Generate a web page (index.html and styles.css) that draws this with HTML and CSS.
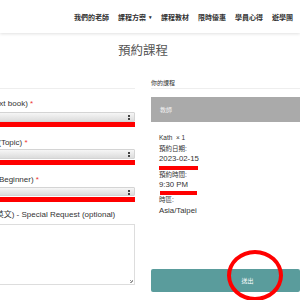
FILE: index.html
```html
<!DOCTYPE html>
<html lang="zh-Hant">
<head>
<meta charset="utf-8">
<link rel="stylesheet" href="styles.css">
</head>
<body>
<header class="topbar">
  <nav class="nav">
    <span class="nav-item">我們的老師</span>
    <span class="nav-item">課程方案<span class="caret">▾</span></span>
    <span class="nav-item">課程教材</span>
    <span class="nav-item">限時優惠</span>
    <span class="nav-item">學員心得</span>
    <span class="nav-item">遊學團</span>
  </nav>
</header>
<main class="page">
  <h1 class="title">預約課程</h1>
  <div class="columns">
    <section class="form-col">
      <div class="col-head"></div>
      <div class="field f1">
        <label class="label l1">課程教材 (Text book) <span class="req">*</span></label>
        <div class="select"><span class="arrows"></span></div>
        <div class="redbar"></div>
      </div>
      <div class="field f2">
        <label class="label l2">主題 (Topic) <span class="req">*</span></label>
        <div class="select"><span class="arrows"></span></div>
        <div class="redbar"></div>
      </div>
      <div class="field f3">
        <label class="label l3">程度 (Beginner) <span class="req">*</span></label>
        <div class="select"><span class="arrows"></span></div>
        <div class="redbar"></div>
      </div>
      <div class="field f4">
        <label class="label l4">特殊要求(請用英文) - Special Request (optional)</label>
        <div class="textarea"><span class="grip"></span></div>
      </div>
    </section>
    <aside class="summary-col">
      <div class="col-head summary-head">你的課程</div>
      <div class="teacher-bar">教師</div>
      <div class="info">
        <div class="line">Kath &nbsp;× 1</div>
        <div class="line l-date">預約日期:</div>
        <div class="line val">2023-02-15</div>
        <div class="redmark w39"></div>
        <div class="line">預約時間:</div>
        <div class="line val">9:30 PM</div>
        <div class="redmark w37"></div>
        <div class="line">時區:</div>
        <div class="line val last">Asia/Taipei</div>
      </div>
      <div class="submit-wrap">
        <button class="submit">送出</button>
        <span class="circle"></span>
      </div>
    </aside>
  </div>
</main>
</body>
</html>
```
FILE: styles.css
```css
* { box-sizing: border-box; }
html, body { margin: 0; padding: 0; }
body {
  width: 300px;
  height: 300px;
  overflow: hidden;
  background: #fff;
  font-family: "Liberation Sans", "Noto Sans CJK TC", Arial, sans-serif;
  color: #333;
}
.topbar {
  height: 33px;
  background: #fff;
  box-shadow: 0 1px 3px rgba(0,0,0,0.12);
  display: flex;
  align-items: center;
  position: relative;
  z-index: 2;
}
.nav {
  display: flex;
  gap: 9px;
  padding-left: 74px;
  white-space: nowrap;
  font-size: 7px;
  font-weight: bold;
  color: #333;
  padding-top: 1px;
}
.nav-item { display: flex; align-items: center; }
.caret { margin-left: 3px; font-size: 5px; }
.title {
  margin: 10px 0 0 118px;
  font-size: 12.5px;
  line-height: 14px;
  font-weight: normal;
  color: #555;
  font-family: "Noto Sans CJK TC", sans-serif;
}
.columns {
  display: grid;
  grid-template-columns: 215px 149px;
  column-gap: 16px;
  margin-left: -80px;
  margin-top: 15px;
}
.col-head {
  height: 17px;
  border-bottom: 1px solid #eee;
}
.summary-head {
  font-size: 6px;
  line-height: 8px;
  padding-top: 7px;
  color: #333;
}
.label {
  display: block;
  font-size: 8px;
  line-height: 10px;
  color: #333;
  white-space: nowrap;
  overflow: hidden;
}
.req { color: #e33; }
.l1 { margin-top: 10px; padding-left: 34px; }
.l2 { margin-top: 11px; padding-left: 60px; }
.l3 { margin-top: 10px; padding-left: 58px; }
.l4 { margin-top: 8px; padding-left: 25px; }
.select {
  position: relative;
  height: 10px;
  border: 1px solid #d4d4d4;
  border-radius: 1px;
  background: linear-gradient(#f6f6f6, #dcdcdc);
}
.f1 .select { margin-top: 3px; }
.f2 .select { margin-top: 1px; }
.f3 .select { margin-top: 2px; height: 9px; }
.arrows {
  position: absolute;
  right: 4px;
  top: 2px;
  width: 2px;
  height: 5px;
  border-top: 2px solid #444;
  border-bottom: 2px solid #444;
}
.redbar {
  height: 5px;
  background: #f00;
}
.f2 .redbar { margin-top: 1px; }
.f3 .redbar { margin-top: 1px; }
.textarea {
  position: relative;
  margin-top: 4px;
  height: 61px;
  border: 1px solid #ddd;
  background: #fff;
}
.grip {
  position: absolute;
  right: 1px;
  bottom: 1px;
  width: 3px;
  height: 3px;
  background: repeating-linear-gradient(135deg, #999 0 1px, transparent 1px 2px);
}
.teacher-bar {
  margin-top: 8px;
  height: 25px;
  background: #aaa;
  color: #f2f2f2;
  font-size: 6px;
  line-height: 25px;
  padding-left: 9px;
  font-family: "Noto Sans CJK TC", sans-serif;
}
.info {
  margin-top: 11px;
  padding-left: 8px;
}
.line {
  font-size: 6.5px;
  line-height: 10px;
  height: 10px;
  color: #333;
  white-space: nowrap;
}
.line.val { font-size: 7.8px; }
.l-date { margin-top: 1px; }
.line.last { margin-top: 1px; }
.redmark {
  height: 4px;
  background: #f00;
  margin-top: 2px;
}
.w39 { width: 39px; }
.w37 { width: 37px; margin-left: 1px; margin-top: 1px; }
.submit-wrap {
  position: relative;
  margin-top: 53px;
}
.submit {
  display: block;
  width: 100%;
  height: 23px;
  border: 0;
  border-radius: 2px;
  background: #5a9c9c;
  color: #fff;
  font-size: 6px;
  font-family: "Noto Sans CJK TC", sans-serif;
  padding: 0 0 0 44px;
  text-align: center;
}
.circle {
  position: absolute;
  left: 76px;
  top: -19px;
  width: 56px;
  height: 51px;
  border: 4px solid #f00;
  border-radius: 50%;
}
```
